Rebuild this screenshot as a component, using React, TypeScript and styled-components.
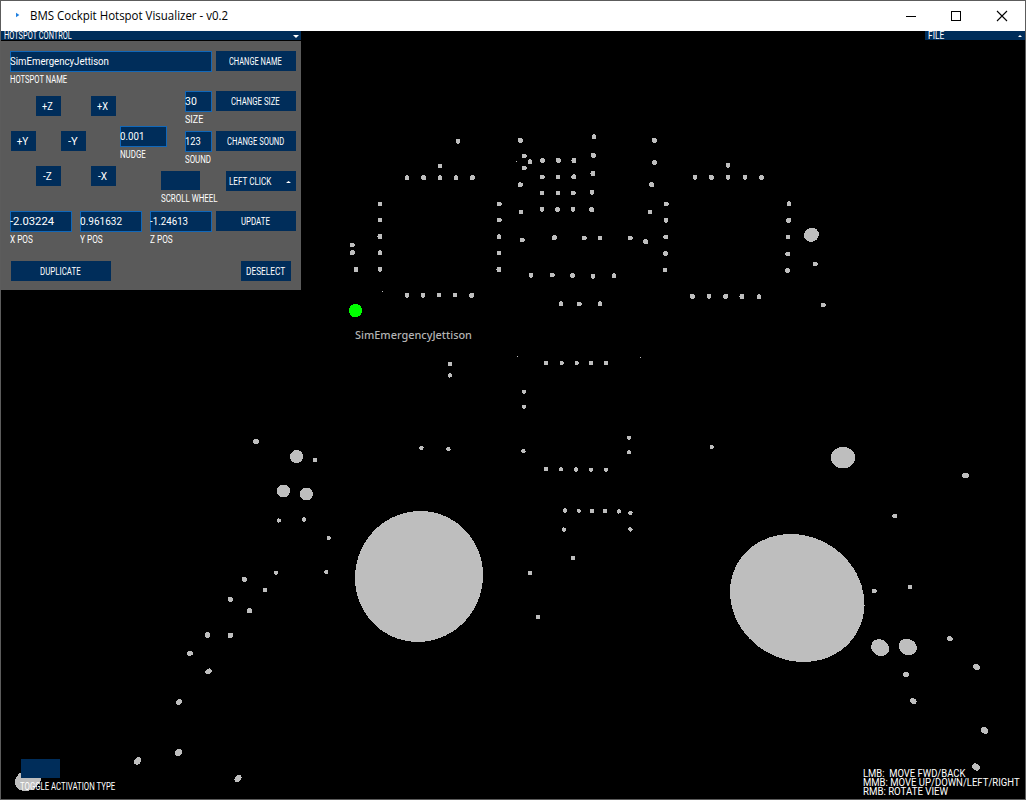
import React, { useLayoutEffect, useRef, useState } from "react";
import styled, { createGlobalStyle } from "styled-components";

const navy = "#002d5a";
const sphere = "#bebebe";

const GlobalStyle = createGlobalStyle`
  *, *::before, *::after { box-sizing: border-box; }
  body { margin: 0; background: #000; overflow: hidden; }
  button, input { font: inherit; color: inherit; }
`;

/* ---------- text fitted to a fixed advance width ---------- */

const FitBox = styled.span<{ $w: number }>`
  display: block;
  flex: none;
  width: ${(p) => p.$w}px;
  white-space: pre;
`;

const FitInner = styled.span`
  display: inline-block;
  transform-origin: 0 50%;
`;

function Fit({ w, children }: { w: number; children: string }) {
  const ref = useRef<HTMLSpanElement>(null);
  const [scale, setScale] = useState(1);
  useLayoutEffect(() => {
    if (ref.current && ref.current.offsetWidth) {
      setScale(w / ref.current.offsetWidth);
    }
  }, [w, children]);
  return (
    <FitBox $w={w}>
      <FitInner ref={ref} style={{ transform: `scaleX(${scale})` }}>
        {children}
      </FitInner>
    </FitBox>
  );
}

/* ---------- window ---------- */

const Window = styled.div`
  width: 1026px;
  height: 800px;
  display: flex;
  flex-direction: column;
  border: 1px solid #5c5c5c;
  background: #000;
  color: #fff;
  font: 10px/10px Roboto, "Liberation Sans", sans-serif;
`;

const TitleBar = styled.header`
  flex: none;
  height: 30px;
  display: flex;
  align-items: center;
  background: #fff;
  color: #000;
  font: 12px/16px "Open Sans", "Noto Sans", sans-serif;
`;

const AppIcon = styled.svg`
  width: 16px;
  height: 16px;
  margin: 0 5px 0 8px;
`;

const WindowButtons = styled.div`
  display: flex;
  margin-left: auto;
`;

const WindowButton = styled.button<{ $w: number }>`
  width: ${(p) => p.$w}px;
  height: 30px;
  padding: 0;
  border: 0;
  background: none;
  display: flex;
  align-items: center;
  justify-content: center;
`;

const Viewport = styled.main`
  position: relative;
  flex: 1;
  min-height: 0;
`;

const Scene = styled.svg`
  display: block;
  width: 1024px;
  height: 768px;
`;

const HotspotName = styled.div`
  position: absolute;
  left: 354px;
  top: 296px;
  color: #b4b4b4;
  font: 500 11px/16px "Noto Sans", "Open Sans", sans-serif;
`;

/* ---------- control panel ---------- */

const Panel = styled.section`
  position: absolute;
  left: 0;
  top: 0;
  width: 300px;
`;

const MenuBar = styled.div`
  height: 9px;
  display: flex;
  align-items: center;
  justify-content: space-between;
  padding: 1px 2px 0 3px;
  background: ${navy};
`;

const FileMenu = styled(MenuBar)`
  position: absolute;
  right: 0;
  top: 0;
  width: 100px;
  padding: 1px 3px 0 3px;
`;

const PanelBody = styled.div`
  height: 249px;
  margin-top: 1px;
  padding: 10px 5px 0 9px;
  background: #5a5a5a;
`;

const Row = styled.div<{ $h: number; $gap?: number; $indent?: number }>`
  display: flex;
  align-items: flex-start;
  height: ${(p) => p.$h}px;
  gap: ${(p) => p.$gap ?? 0}px;
  padding-left: ${(p) => p.$indent ?? 0}px;
`;

const Column = styled.div<{ $gap?: number; $top?: number; $left?: number }>`
  display: flex;
  flex-direction: column;
  flex: none;
  gap: ${(p) => p.$gap ?? 0}px;
  padding-top: ${(p) => p.$top ?? 0}px;
  margin-left: ${(p) => p.$left ?? 0}px;
`;

const Button = styled.button<{ $w: number; $push?: boolean }>`
  flex: none;
  width: ${(p) => p.$w}px;
  height: 20px;
  margin-left: ${(p) => (p.$push ? "auto" : "0")};
  padding: 1px 2px 0 0;
  border: 0;
  background: ${navy};
  display: flex;
  align-items: center;
  justify-content: center;
`;

const Dropdown = styled(Button)`
  justify-content: space-between;
  padding: 1px 5px 0 3px;
`;

const FieldBox = styled.div<{ $w: number }>`
  width: ${(p) => p.$w}px;
  height: 21px;
  margin-bottom: 3px;
  display: flex;
  align-items: center;
  padding-top: 1px;
  border: 1px solid #1168ba;
  background: ${navy};
  font-size: 10.5px;

  ${FitBox} { margin-left: -1px; }
`;

const Caption = styled.div`
  height: 10px;
`;

const FieldGroup = styled.div`
  flex: none;
  height: 40px;
`;

const NudgePad = styled.div`
  display: grid;
  flex: none;
  grid-template-columns: 25px 25px 25px 5px 25px;
  grid-template-rows: repeat(3, 20px);
  row-gap: 15px;
  margin-left: 1px;
  padding-top: 5px;
`;

const PadCell = styled.div<{ $col: number; $row: number }>`
  grid-column: ${(p) => p.$col};
  grid-row: ${(p) => p.$row};
`;

const Toggle = styled.div`
  width: 39px;
  height: 19px;
  margin-bottom: 4px;
  background: ${navy};
`;

const ActivationToggle = styled.div`
  position: absolute;
  left: 20px;
  top: 728px;

  ${FitBox} { margin-left: -1px; }
`;

const Help = styled.div`
  position: absolute;
  left: 862px;
  top: 738px;
  font-size: 10px;
  line-height: 9px;
`;

function Field({ w, value, valueW, label, labelW }: {
  w: number; value: string; valueW: number; label: string; labelW: number;
}) {
  return (
    <FieldGroup>
      <FieldBox $w={w}><Fit w={valueW}>{value}</Fit></FieldBox>
      <Caption><Fit w={labelW}>{label}</Fit></Caption>
    </FieldGroup>
  );
}

/* ---------- hotspots ---------- */

type Spot = [number, number];

const smallSpots: Spot[] = [
  [458, 141.3], [440, 166], [407, 177.7], [423.7, 177.7], [440, 177.7], [456, 177.7], [472.3, 177.7],
  [380, 204], [380, 220], [380, 236.5], [380, 252.7], [380, 269.3],
  [499.3, 204], [499.3, 220], [499, 236.7], [499, 253], [499, 269.5],
  [352.4, 245], [352.4, 252.8], [356, 269.6],
  [407, 295.2], [423, 295.2], [439, 295], [455, 295], [471.7, 295.4],
  [520.3, 140.4], [524.3, 156], [530, 161.7], [524.3, 168], [520.3, 184.8], [521, 212], [522.4, 240],
  [542.4, 160.4], [558.3, 160.4], [574, 160.5], [542.3, 177], [558, 177], [573.8, 176.8],
  [542, 193], [558, 193], [573.4, 193], [542, 209.4], [557.5, 209.3], [573, 209.3],
  [594, 136.8], [593.3, 155.4], [593, 173.5], [592, 192.2], [591.6, 209.8],
  [654.3, 140.4], [654.6, 162.6], [651.7, 184.7], [650, 212],
  [666.3, 204], [666, 220.4], [665.7, 237], [665.4, 253.7], [665, 270],
  [554.4, 237.8], [584.4, 238], [600, 238], [630.4, 238], [645.6, 241.7],
  [531, 275.4], [552.2, 275], [572.4, 275.6], [593, 276.4], [614, 275.8],
  [561, 303.8], [579.4, 304], [600, 303.8],
  [728, 165.4], [695, 177.4], [711.3, 177.4], [728, 177.4], [745, 177.4], [761.7, 177.4],
  [789, 203.8], [788.7, 220.4], [788, 237], [787.7, 254], [787.3, 270.5],
  [692.3, 296.4], [709, 296.4], [725.7, 296.4], [742, 296.5], [759, 296.7],
  [815.4, 264], [823.4, 305],
  [894.7, 516], [874.4, 591], [910, 587],
];

const tinySpots: Spot[] = [
  [450, 364], [449.7, 375.4], [546, 363], [561.7, 363], [576.7, 363], [591, 363], [606, 363],
  [524, 391.8], [524, 406.6], [629, 437.6], [629, 452.4], [421.4, 447.7], [448.4, 449.3],
  [523.4, 451.3], [711.6, 447], [546, 469], [560.8, 469.3], [576, 469.5], [591, 469.7], [606, 469.8],
  [565, 510.5], [578.7, 510.7], [592, 511], [605, 511], [618.7, 511.4], [630.4, 512.7],
  [563.7, 529.6], [630.4, 529.4], [573, 558], [530, 573], [538, 617],
  [315, 460], [278.8, 520.5], [304, 519.5], [328.7, 538], [326.4, 572], [276, 572.6], [265, 590],
];

const pinpoints: Spot[] = [[382, 291], [516, 161], [517, 356], [640, 357], [864, 605]];

// cx, cy, rx, ry, tilt in degrees
const ellipses: [number, number, number, number, number][] = [
  [419, 576.5, 65.7, 63.8, -70],
  [797.2, 598, 69, 62, 31.3],
  [843, 457.6, 12.1, 10.7, 0],
  [811.4, 234.8, 7.6, 7, -20],
  [880.2, 647.6, 9.4, 8, 30],
  [907.8, 647, 9.4, 7.9, 25],
  [296.6, 456.6, 6.6, 6.5, 0],
  [283.4, 491, 6.6, 6.5, 0],
  [306.4, 494, 6.6, 6.4, 0],
  [28, 780, 13.6, 10.2, -25],
  [965.7, 475.4, 3.5, 2.7, 0],
  [949.7, 638.7, 3, 2.5, 20],
  [906.2, 674.5, 3, 2.6, 20],
  [976.4, 667, 3.6, 2.8, 35],
  [913.2, 701, 3.5, 2.8, 40],
  [984.7, 730.5, 3.9, 3.1, 40],
  [975.8, 767, 4.1, 3.2, 35],
  [256, 441.4, 3.1, 2.7, 0],
  [244.4, 579.4, 2.7, 2.5, 0],
  [230.4, 599.4, 2.7, 2.6, 0],
  [249.4, 610.8, 2.7, 2.5, 0],
  [207.6, 635, 2.7, 2.7, 0],
  [230.4, 635.4, 2.8, 2.7, 0],
  [190, 653.4, 3.1, 2.6, -30],
  [208.6, 671.4, 3.4, 2.6, -35],
  [179, 702, 3.5, 2.8, -40],
  [178.7, 752.4, 3.9, 3.1, -45],
  [137.6, 761, 4, 3.2, -40],
  [238, 778.4, 4.1, 3, -50],
];

function Hotspots() {
  return (
    <Scene viewBox="1 31 1024 768" shapeRendering="crispEdges" fill={sphere}>
      {ellipses.map(([x, y, rx, ry, tilt]) => (
        <ellipse key={`${x}-${y}`} cx={x} cy={y} rx={rx} ry={ry} transform={`rotate(${tilt} ${x} ${y})`} />
      ))}
      {smallSpots.map(([x, y]) => <circle key={`${x}-${y}`} cx={x} cy={y} r={2.5} />)}
      {tinySpots.map(([x, y]) => <circle key={`${x}-${y}`} cx={x} cy={y} r={2.2} />)}
      {pinpoints.map(([x, y]) => <rect key={`${x}-${y}`} x={x} y={y} width={1} height={1} />)}
      <circle cx={355.5} cy={310.6} r={6.7} fill="#00ff00" />
    </Scene>
  );
}

export default function App() {
  return (
    <>
      <GlobalStyle />
      <Window>
        <TitleBar>
          <AppIcon viewBox="0 0 16 16"><path d="M7 4.8 10.4 7 7 9.2z" fill="#2080e0" /></AppIcon>
          <Fit w={198}>BMS Cockpit Hotspot Visualizer - v0.2</Fit>
          <WindowButtons>
            <WindowButton $w={44} aria-label="Minimize">
              <svg width="12" height="12" shapeRendering="crispEdges"><path d="M1 6h10v1H1z" /></svg>
            </WindowButton>
            <WindowButton $w={46} aria-label="Maximize">
              <svg width="12" height="12" shapeRendering="crispEdges"><rect x="1.5" y="1.5" width="9" height="9" fill="none" stroke="#000" /></svg>
            </WindowButton>
            <WindowButton $w={46} aria-label="Close">
              <svg width="12" height="12"><path d="m1 1 10 10M11 1 1 11" stroke="#000" strokeWidth="1.1" /></svg>
            </WindowButton>
          </WindowButtons>
        </TitleBar>

        <Viewport>
          <Hotspots />
          <HotspotName><Fit w={117}>SimEmergencyJettison</Fit></HotspotName>

          <Panel>
            <MenuBar>
              <Fit w={68}>HOTSPOT CONTROL</Fit>
              <svg width="6" height="3"><path d="M0 0h6L3 3z" fill="#fff" /></svg>
            </MenuBar>
            <PanelBody>
              <Row $h={40} $gap={4}>
                <Field w={202} value="SimEmergencyJettison" valueW={99} label="HOTSPOT NAME" labelW={57} />
                <Button $w={80}><Fit w={53}>CHANGE NAME</Fit></Button>
              </Row>

              <Row $h={120}>
                <NudgePad>
                  <PadCell $col={2} $row={1}><Button $w={25}><Fit w={11}>+Z</Fit></Button></PadCell>
                  <PadCell $col={5} $row={1}><Button $w={25}><Fit w={11}>+X</Fit></Button></PadCell>
                  <PadCell $col={1} $row={2}><Button $w={25}><Fit w={12}>+Y</Fit></Button></PadCell>
                  <PadCell $col={3} $row={2}><Button $w={25}><Fit w={10}>-Y</Fit></Button></PadCell>
                  <PadCell $col={2} $row={3}><Button $w={25}><Fit w={9}>-Z</Fit></Button></PadCell>
                  <PadCell $col={5} $row={3}><Button $w={25}><Fit w={9}>-X</Fit></Button></PadCell>
                </NudgePad>
                <Column $left={4}>
                  <Row $h={80}>
                    <Column $top={35}>
                      <Field w={47} value="0.001" valueW={24} label="NUDGE" labelW={26} />
                    </Column>
                    <Column $left={18}>
                      <Row $h={40} $gap={4}>
                        <Field w={27} value="30" valueW={12} label="SIZE" labelW={18} />
                        <Button $w={80}><Fit w={49}>CHANGE SIZE</Fit></Button>
                      </Row>
                      <Row $h={40} $gap={4}>
                        <Field w={27} value="123" valueW={16} label="SOUND" labelW={26} />
                        <Button $w={80}><Fit w={57}>CHANGE SOUND</Fit></Button>
                      </Row>
                    </Column>
                  </Row>
                  <Row $h={40} $indent={41}>
                    <Column>
                      <Toggle />
                      <Fit w={57}>SCROLL WHEEL</Fit>
                    </Column>
                    <Dropdown $w={70} $push>
                      <Fit w={42}>LEFT CLICK</Fit>
                      <svg width="5" height="2"><path d="M0 2h5L2.5 0z" fill="#fff" /></svg>
                    </Dropdown>
                  </Row>
                </Column>
              </Row>

              <Row $h={50}>
                <Row $h={40} $gap={8}>
                  <Field w={62} value="-2.03224" valueW={44} label="X POS" labelW={23} />
                  <Field w={62} value="0.961632" valueW={42} label="Y POS" labelW={23} />
                  <Field w={62} value="-1.24613" valueW={38} label="Z POS" labelW={23} />
                </Row>
                <Button $w={80} $push><Fit w={29}>UPDATE</Fit></Button>
              </Row>

              <Row $h={20} $indent={1} $gap={130}>
                <Button $w={100}><Fit w={41}>DUPLICATE</Fit></Button>
                <Button $w={50}><Fit w={39}>DESELECT</Fit></Button>
              </Row>
            </PanelBody>
          </Panel>

          <FileMenu>
            <Fit w={16}>FILE</Fit>
            <svg width="4" height="2"><path d="M0 2h4L2 0z" fill="#fff" /></svg>
          </FileMenu>

          <ActivationToggle>
            <Toggle />
            <Fit w={95}>TOGGLE ACTIVATION TYPE</Fit>
          </ActivationToggle>

          <Help>
            <Fit w={102}>LMB:  MOVE FWD/BACK</Fit>
            <Fit w={157}>MMB: MOVE UP/DOWN/LEFT/RIGHT</Fit>
            <Fit w={85}>RMB: ROTATE VIEW</Fit>
          </Help>
        </Viewport>
      </Window>
    </>
  );
}
